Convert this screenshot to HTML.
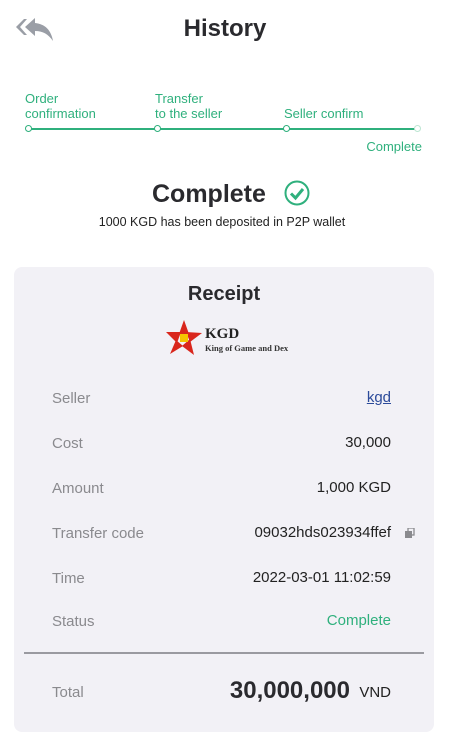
<!DOCTYPE html>
<html><head><meta charset="utf-8"><style>
body{margin:0;width:450px;height:751px;background:#fff;font-family:"Liberation Sans",sans-serif;position:relative;overflow:hidden}
.a{position:absolute;white-space:nowrap}
.g{color:#2fb07d;font-size:13px;line-height:15px}
.lab{position:absolute;left:52px;color:#8a8a8e;font-size:15px}
.val{position:absolute;right:59px;color:#222;font-size:15px}
.dot{position:absolute;width:5px;height:5px;border:1.5px solid #2fb07d;border-radius:50%;background:#fff;top:125px}
</style></head><body>
<svg class="a" style="left:15px;top:16px" width="40" height="26" viewBox="0 0 40 26"><path d="M9 3 L1 11 L9 19 L12 19 L5 11 L12 3Z" fill="#9a9ea6"/><path d="M20 2 L10 11 L20 20 L20 15 C28 15 33 18 38 25 C36 14 30 8 20 7Z" fill="#9a9ea6"/></svg>
<div class="a" style="left:0;width:450px;text-align:center;top:15px;font-size:24px;font-weight:bold;color:#2a2a2e">History</div>
<div class="a g" style="left:25px;top:91px">Order<br>confirmation</div>
<div class="a g" style="left:155px;top:91px">Transfer<br>to the seller</div>
<div class="a g" style="left:284px;top:106px">Seller confirm</div>
<div class="a" style="left:29px;top:128px;width:389px;height:2px;background:#2fb07d"></div>
<div class="dot" style="left:25px"></div><div class="dot" style="left:154px"></div><div class="dot" style="left:283px"></div>
<div class="dot" style="left:414px;border-color:#bde6d3"></div>
<div class="a g" style="right:28px;top:139px">Complete</div>
<div class="a" style="left:152px;top:180px;font-size:25px;font-weight:bold;color:#2a2a2e">Complete</div>
<svg class="a" style="left:284px;top:180px" width="26" height="26" viewBox="0 0 26 26"><circle cx="13" cy="13" r="11.5" fill="none" stroke="#2fb07d" stroke-width="2"/><path d="M7 13.5 L11.5 18 L19 9" fill="none" stroke="#2fb07d" stroke-width="3"/></svg>
<div class="a" style="left:0;width:444px;text-align:center;top:215px;font-size:12.5px;color:#222">1000 KGD has been deposited in P2P wallet</div>
<div class="a" style="left:14px;top:267px;width:420px;height:465px;background:#f2f1f6;border-radius:8px"></div>
<div class="a" style="left:14px;width:420px;text-align:center;top:283px;font-size:20px;font-weight:bold;color:#2a2a2e">Receipt</div>
<svg class="a" style="left:164px;top:318px" width="40" height="40" viewBox="0 0 40 40"><g fill="#d9261c"><path d="M20 2 L25 16 L15 16Z"/><path d="M38 15 L26 24 L22 14Z"/><path d="M30 37 L18 28 L26 21Z"/><path d="M6 36 L12 22 L19 28Z"/><path d="M2 14 L17 14 L13 25Z"/></g><rect x="16" y="16" width="8" height="8" fill="#f5c400"/></svg>
<div class="a" style="left:205px;top:326px;font-family:'Liberation Serif',serif;font-weight:bold;font-size:15px;color:#222">KGD</div>
<div class="a" style="left:205px;top:343px;font-family:'Liberation Serif',serif;font-weight:bold;font-size:8.5px;color:#333">King of Game and Dex</div>
<div class="lab" style="top:390px">Seller</div><div class="val" style="top:389px;color:#2b4a9a;text-decoration:underline">kgd</div>
<div class="lab" style="top:435px">Cost</div><div class="val" style="top:434px">30,000</div>
<div class="lab" style="top:480px">Amount</div><div class="val" style="top:479px">1,000 KGD</div>
<div class="lab" style="top:525px">Transfer code</div><div class="val" style="top:524px">09032hds023934ffef</div>
<svg class="a" style="left:405px;top:528px" width="10" height="11"><rect x="0" y="3" width="7" height="7" fill="#8a8a8e"/><rect x="3" y="0" width="6" height="7" fill="none" stroke="#8a8a8e" stroke-width="1.3"/></svg>
<div class="lab" style="top:570px">Time</div><div class="val" style="top:569px">2022-03-01 11:02:59</div>
<div class="lab" style="top:613px">Status</div><div class="val" style="top:612px;color:#2fb07d">Complete</div>
<div class="a" style="left:24px;top:652px;width:400px;height:1.5px;background:#9a9aa0"></div>
<div class="lab" style="top:684px">Total</div>
<div class="a" style="right:100px;top:677px;font-size:24px;font-weight:bold;color:#2a2a2e">30,000,000</div>
<div class="a" style="right:59px;top:684px;font-size:15px;color:#222">VND</div>
</body></html>
